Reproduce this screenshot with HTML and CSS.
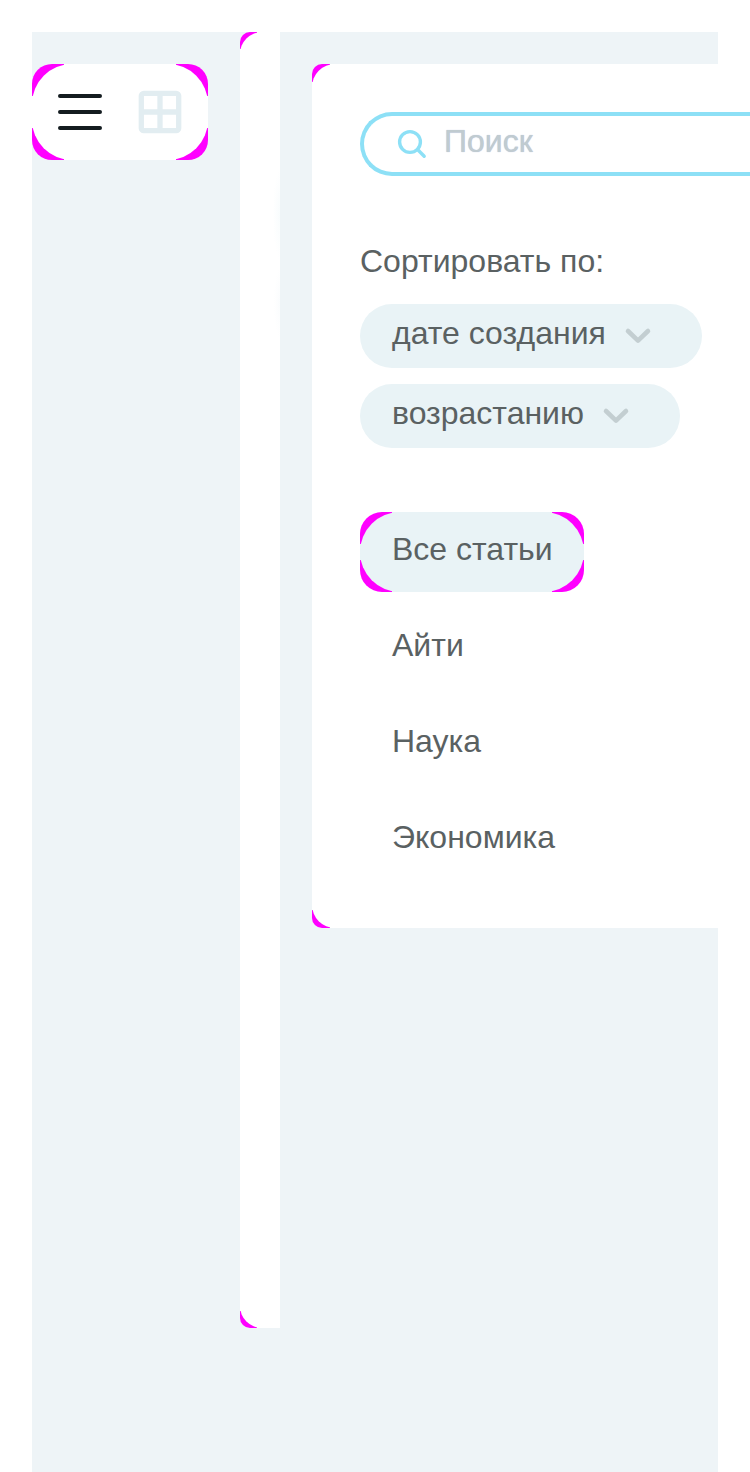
FILE: index.html
```html
<!DOCTYPE html>
<html lang="ru">
<head>
<meta charset="utf-8">
<title>Статьи</title>
<link rel="stylesheet" href="styles.css">
</head>
<body>
<main class="page">
  <div class="corner corner-toggle">
    <div class="view-toggle">
      <svg class="icon" width="48" height="48" viewBox="0 0 48 48" fill="none" stroke="#141c20" stroke-width="4" stroke-linecap="round"><path d="M4 8H44M4 24H44M4 40H44"/></svg>
      <svg class="icon" width="48" height="48" viewBox="0 0 48 48" fill="none" stroke="#e2edf1" stroke-width="5.3"><rect x="5.3" y="5.3" width="37.4" height="37.4" rx="2.5"/><path d="M24 5V43M5 24H43"/></svg>
    </div>
  </div>
  <div class="corner corner-feed"><div class="feed"></div></div>
  <div class="corner corner-filters">
    <section class="filters">
      <label class="search">
        <svg class="search-icon" width="32" height="32" viewBox="0 0 32 32" fill="none" stroke="#8de0f6" stroke-width="3.4" stroke-linecap="round"><circle cx="14" cy="14" r="10.4"/><path d="M21.8 21.8L28.2 28.2"/></svg>
        <span class="placeholder">Поиск</span>
      </label>
      <div class="sort-title">Сортировать по:</div>
      <div class="select select-date"><span>дате создания</span><svg class="chevron" width="32" height="32" viewBox="0 0 32 32" fill="none" stroke="#c3ced1" stroke-width="4.6" stroke-linecap="round" stroke-linejoin="round"><path d="M6 11L16 20.6L26 11"/></svg></div>
      <div class="select select-order"><span>возрастанию</span><svg class="chevron" width="32" height="32" viewBox="0 0 32 32" fill="none" stroke="#c3ced1" stroke-width="4.6" stroke-linecap="round" stroke-linejoin="round"><path d="M6 11L16 20.6L26 11"/></svg></div>
      <nav class="tabs">
        <div class="corner corner-tab"><div class="tab tab-active">Все статьи</div></div>
        <div class="tab">Айти</div>
        <div class="tab">Наука</div>
        <div class="tab">Экономика</div>
      </nav>
    </section>
  </div>
</main>
</body>
</html>
```
FILE: styles.css
```css
* { box-sizing: border-box; }
body {
  margin: 0;
  padding: 32px 32px 0;
  height: 1472px;
  overflow: hidden;
  background: #fff;
  color: #5a6162;
  font: 32px/36px "Liberation Sans", Arial, sans-serif;
}
.page {
  display: flex;
  align-items: flex-start;
  gap: 32px;
  height: 1440px;
  background: #eef4f7;
}
/* Accent squares under the corners; the rounded card on top leaves a crescent. */
.corner {
  --accent: linear-gradient(#f0f, #f0f);
  --size: 32px;
  --fill: #fff;
  flex: none;
  background-color: var(--fill);
  background-image: var(--accent), var(--accent), var(--accent), var(--accent);
  background-position: 0 0, 100% 0, 0 100%, 100% 100%;
  background-size: var(--size) var(--size);
  background-repeat: no-repeat;
}
.corner-toggle { width: 176px; margin-top: 32px; border-radius: 20px; }
.view-toggle {
  display: flex;
  align-items: center;
  gap: 32px;
  height: 96px;
  padding: 0 24px;
  border-radius: 40px;
  background: #fff;
}
.icon, .search-icon, .chevron { display: block; flex: none; }
.corner-feed { --size: 17px; width: 40px; border-radius: 10px 0 0 10px; }
.feed {
  height: 1296px;
  border-radius: 22px 0 0 22px;
  background:
    radial-gradient(ellipse 7px 46px at 100% 182px, #f8fcfd, rgba(255, 255, 255, 0)),
    radial-gradient(ellipse 6px 36px at 100% 271px, #fafcfd, rgba(255, 255, 255, 0)),
    #fff;
}
.corner-filters { --size: 18px; width: 460px; margin-top: 32px; border-radius: 10px 0 0 10px; }
.filters {
  height: 864px;
  padding: 48px 0 0 48px;
  border-radius: 23px 0 0 23px;
  background: #fff;
}
.search {
  display: flex;
  align-items: center;
  gap: 16px;
  height: 64px;
  padding-left: 32px;
  border: 4px solid #8de0f6;
  border-right: 0;
  border-radius: 32px 0 0 32px;
}
.placeholder {
  padding-bottom: 6px;
  color: #c0cbd0;
  text-shadow: 0 0 1px #b2bfdf;
}
.sort-title { margin: 67px 0 25px; }
.select {
  display: flex;
  align-items: center;
  gap: 16px;
  height: 64px;
  padding-left: 32px;
  margin-bottom: 16px;
  border-radius: 32px;
  background: #e9f3f6;
}
.select span { padding-bottom: 6px; }
.select-date { width: 342px; }
.select-order { width: 320px; }
.tabs {
  display: flex;
  flex-direction: column;
  align-items: flex-start;
  gap: 16px;
  margin-top: 64px;
}
.corner-tab { --fill: #e9f3f6; width: 224px; border-radius: 22px; }
.tab { height: 80px; padding: 19px 0 0 32px; white-space: nowrap; }
.tab-active { border-radius: 40px; background: #e9f3f6; }
```
